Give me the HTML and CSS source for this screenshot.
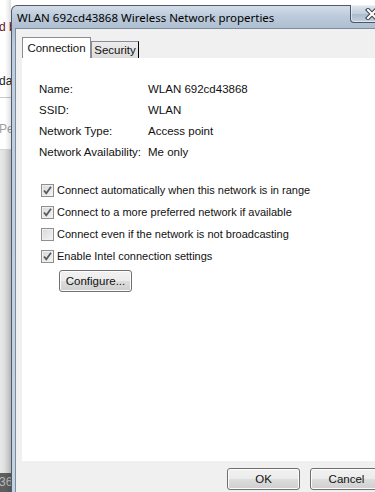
FILE: index.html
```html
<!DOCTYPE html>
<html lang="en">
<head>
  <meta charset="UTF-8" />
  <title>WLAN 692cd43868 Wireless Network properties</title>
  <link rel="stylesheet" href="styles.css">
</head>
<body>

<div class="screen">
  <div class="behind">
    <div class="bg-white"></div>
    <div class="bg-line red">d b</div>
    <div class="bg-gap"></div>
    <div class="bg-line dark">da</div>
    <div class="bg-rule"></div>
    <div class="bg-line faint">Pe</div>
    <div class="bg-grey"></div>
    <div class="bg-task">36</div>
  </div>

  <div class="window">
    <div class="titlebar">
      <span class="title">WLAN 692cd43868 Wireless Network properties</span>
      <span class="close">
        <svg width="14" height="12" viewBox="0 0 14 12">
          <path d="M3 2 L11 10 M11 2 L3 10" stroke="#3b4049" stroke-width="4.2" stroke-linecap="square"/>
          <path d="M3 2 L11 10 M11 2 L3 10" stroke="#ffffff" stroke-width="2.2" stroke-linecap="square"/>
        </svg>
      </span>
    </div>

    <div class="client">
      <div class="tabs">
        <span class="tab active">Connection</span>
        <span class="tab">Security</span>
      </div>

      <div class="panel">
        <div class="info">
          <span>Name:</span><span>WLAN 692cd43868</span>
          <span>SSID:</span><span>WLAN</span>
          <span>Network Type:</span><span>Access point</span>
          <span>Network Availability:</span><span>Me only</span>
        </div>

        <div class="options">
          <label class="option"><span class="box checked"><svg width="11" height="11" viewBox="0 0 11 11"><path d="M2 5.5 L4.3 8.3 L9 1.8" fill="none" stroke="#555b63" stroke-width="1.8"/></svg></span>Connect automatically when this network is in range</label>
          <label class="option"><span class="box checked"><svg width="11" height="11" viewBox="0 0 11 11"><path d="M2 5.5 L4.3 8.3 L9 1.8" fill="none" stroke="#555b63" stroke-width="1.8"/></svg></span>Connect to a more preferred network if available</label>
          <label class="option"><span class="box"></span>Connect even if the network is not broadcasting</label>
          <label class="option"><span class="box checked"><svg width="11" height="11" viewBox="0 0 11 11"><path d="M2 5.5 L4.3 8.3 L9 1.8" fill="none" stroke="#555b63" stroke-width="1.8"/></svg></span>Enable Intel connection settings</label>
        </div>

        <button class="btn configure">Configure...</button>
      </div>

      <div class="footer">
        <button class="btn">OK</button>
        <button class="btn">Cancel</button>
      </div>
    </div>
  </div>
</div>

</body>
</html>
```

FILE: styles.css
```css
* {
  box-sizing: border-box;
}

body {
  margin: 0;
  padding: 0;
  font-family: "Liberation Sans", Arial, sans-serif;
  font-size: 11.5px;
  color: #111;
  background: #fff;
  overflow: hidden;
}

.screen {
  display: flex;
  width: 375px;
  height: 492px;
  overflow: hidden;
}

/* the window behind the dialog */
.behind {
  flex: 0 0 11px;
  position: relative;
  display: flex;
  flex-direction: column;
  overflow: hidden;
  background: #fff;
}

.behind::after {
  content: "";
  position: absolute;
  top: 0;
  bottom: 0;
  right: 0;
  width: 6px;
  background: linear-gradient(to right, rgba(0,0,0,0), rgba(0,0,0,0.12));
}

.bg-white {
  flex: none;
  height: 20px;
}

.bg-line {
  flex: none;
  height: 15px;
  line-height: 15px;
  font-size: 12px;
  white-space: nowrap;
  margin-left: -1px;
}

.red {
  color: #6b1020;
}

.dark {
  color: #222;
}

.faint {
  color: #a0a0a0;
  margin-top: 24px;
}

.bg-gap {
  flex: none;
  height: 39px;
}

.bg-rule {
  flex: none;
  height: 1px;
  margin-top: 8px;
  background: #c8c8c8;
}

.bg-grey {
  flex: 1;
  margin-top: 12px;
  background: linear-gradient(to right, #e9e9e9, #cfcfcf);
  border-top: 1px solid #d4d4d4;
}

.bg-task {
  flex: none;
  height: 19px;
  line-height: 19px;
  background: #5e5e5e;
  color: #b9b9b9;
  font-size: 12px;
  white-space: nowrap;
  margin-left: -1px;
}

/* dialog */
.window {
  flex: 0 0 384px;
  margin-top: 5px;
  border: 1px solid #4e5a68;
  border-bottom: none;
  border-radius: 6px 6px 0 0;
  padding: 0 3px;
  background: linear-gradient(#d3dde8 0, #bccbdb 10px, #aebfd1 22px, #bccee0 40px, #c3d4e5);
  display: flex;
  flex-direction: column;
}

.titlebar {
  flex: none;
  height: 22px;
  display: flex;
  align-items: center;
}

.title {
  padding-left: 2px;
  font-family: "Noto Sans", sans-serif;
  font-size: 11.5px;
  color: #000;
  white-space: nowrap;
}

.close {
  margin-left: auto;
  margin-right: -2px;
  align-self: flex-start;
  margin-top: -1px;
  width: 43px;
  height: 18px;
  border: 1px solid #4b5564;
  border-top: none;
  border-radius: 0 0 4px 4px;
  background: linear-gradient(#dfe6ee, #c3cfdc 50%, #aabbcd 51%, #c0cfdf);
  display: flex;
  align-items: center;
  justify-content: center;
  box-shadow: inset 0 0 0 1px rgba(255,255,255,0.5);
}

.client {
  flex: 1;
  background: #f0f0f0;
  border: 1px solid #7d8b9a;
  border-bottom: none;
  padding: 8px 6px 0 6px;
  display: flex;
  flex-direction: column;
}

.tabs {
  flex: none;
  display: flex;
  align-items: flex-end;
  height: 21px;
}

.tab {
  height: 17px;
  line-height: 17px;
  width: 48px;
  text-align: center;
  border: 1px solid #898c95;
  border-bottom: none;
  border-right: 1px solid #000;
  background: linear-gradient(#ececec, #dcdcdc);
}

.tab.active {
  width: 69px;
  height: 21px;
  line-height: 21px;
  background: #fff;
  border-right: 1px solid #898c95;
}

.panel {
  flex: none;
  height: 403px;
  background: #fff;
  padding: 20px 17px 0;
  display: flex;
  flex-direction: column;
  align-items: flex-start;
}

.info {
  display: grid;
  grid-template-columns: 109px auto;
  grid-auto-rows: 21px;
  align-items: center;
}

.options {
  margin-top: 17px;
  padding-left: 2px;
  display: flex;
  flex-direction: column;
  font-size: 11px;
}

.option {
  height: 22px;
  display: flex;
  align-items: center;
  gap: 3px;
  white-space: nowrap;
}

.box {
  width: 13px;
  height: 13px;
  border: 1px solid #8e8f8f;
  background: linear-gradient(135deg, #d8d8d8, #f4f4f4);
  box-shadow: inset 0 0 0 1px #f0f0f0;
  display: flex;
  align-items: center;
  justify-content: center;
}

.btn {
  height: 22px;
  width: 73px;
  padding: 0;
  border: 1px solid #707070;
  border-radius: 3px;
  background: linear-gradient(#f2f2f2 0%, #ebebeb 50%, #dddddd 51%, #cfcfcf 100%);
  box-shadow: inset 0 0 0 1px #fcfcfc;
  font-family: "Liberation Sans", Arial, sans-serif;
  font-size: 11.5px;
  color: #111;
}

.configure {
  margin-top: 3px;
  margin-left: 20px;
}

.footer {
  display: flex;
  justify-content: flex-end;
  gap: 10px;
  padding: 7px 1px 0 0;
}
```
